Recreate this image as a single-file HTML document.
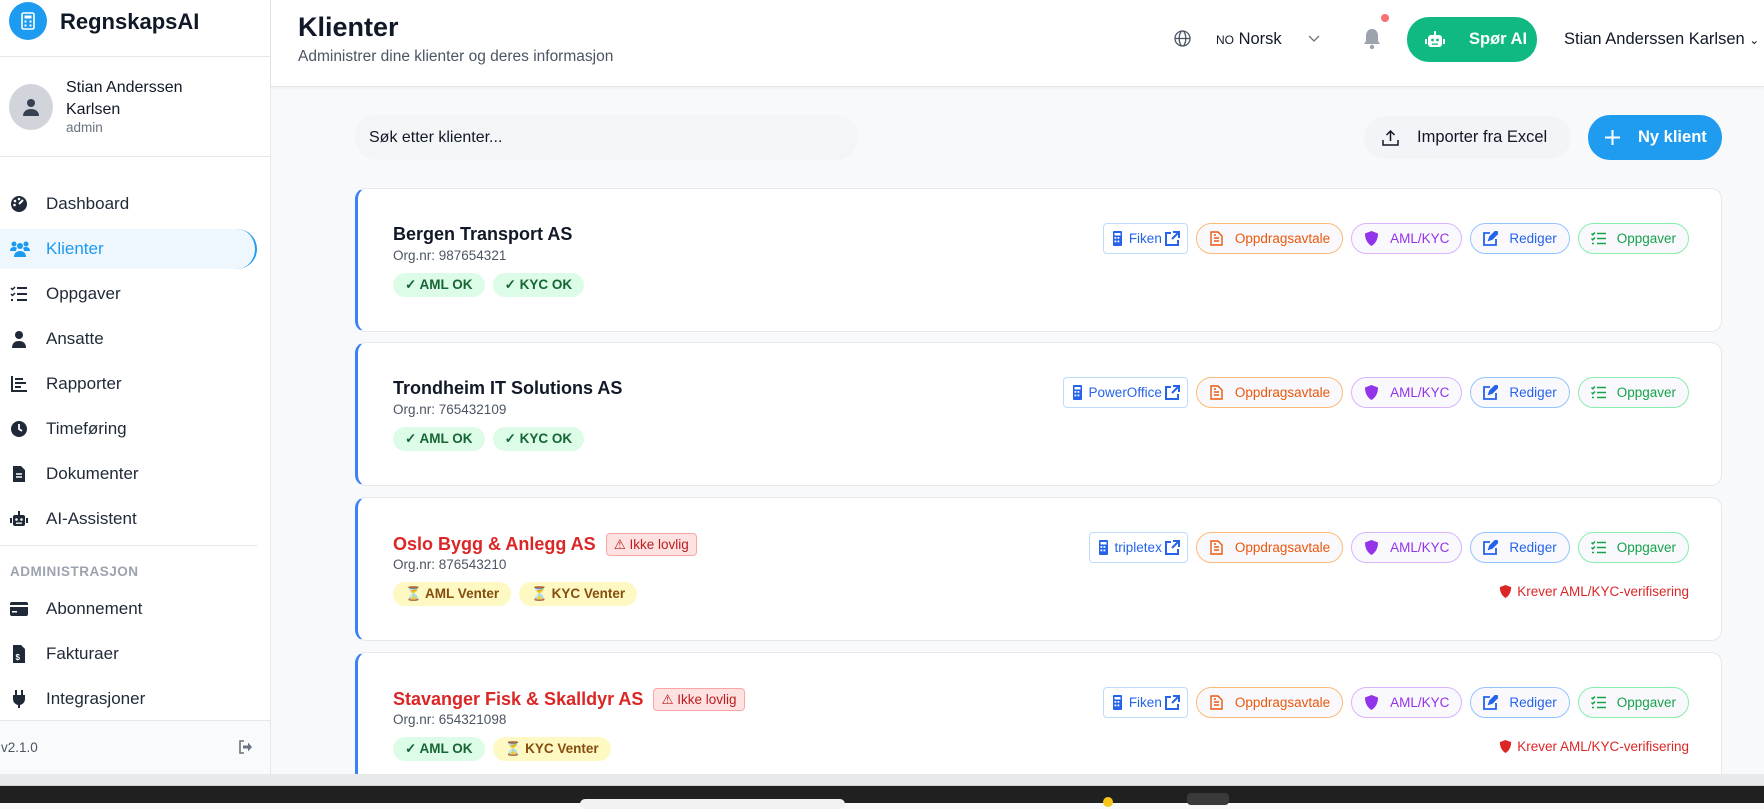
<!DOCTYPE html>
<html><head><meta charset="utf-8"><style>
*{box-sizing:border-box;margin:0;padding:0}
body{width:1764px;height:803px;overflow:hidden;font-family:"Liberation Sans",sans-serif;background:#f8f9fb;position:relative;color:#111827}
.abs{position:absolute}
#side{left:0;top:0;width:271px;height:774px;background:#fff;border-right:1px solid #e5e7eb}
.nav{position:absolute;left:0;width:257px;height:40px;display:flex;align-items:center;font-size:17px;color:#1f2937}
.nav .ic{width:46px;padding-left:10px;display:flex;align-items:center}
.nav svg{width:18px;height:18px;fill:#1f2937}
#hdr{left:271px;top:0;width:1493px;height:87px;background:#fff;border-bottom:1px solid #e5e7eb;box-shadow:0 1px 3px rgba(0,0,0,.05)}
.card{position:absolute;left:355px;width:1367px;height:144px;background:#fff;border:1px solid #e5e7eb;border-left:3px solid #3b82f6;border-radius:11px}
.cname{position:absolute;left:35px;top:35px;font-size:18px;font-weight:bold;color:#111827;display:flex;align-items:center}
.org{position:absolute;left:35px;top:59px;font-size:13.5px;color:#4b5563}
.badges{position:absolute;left:35px;top:84px;display:flex;gap:8px}
.b{height:24px;border-radius:12px;padding:0 12px;font-size:13.5px;font-weight:bold;display:flex;align-items:center}
.ok{background:#dcfce7;color:#166534}
.wt{background:#fef9c3;color:#854d0e}
.il{margin-left:10px;height:23px;background:#fee2e2;border:1px solid #fca5a5;border-radius:4px;color:#b91c1c;font-size:13.5px;font-weight:normal;padding:0 7px;display:flex;align-items:center;gap:4px}
.acts{position:absolute;right:32px;top:34px;display:flex;gap:8px}
.a{height:31px;border-radius:16px;padding:0 12px;font-size:13.5px;display:flex;align-items:center;gap:11px;background:#f9f8fd;border:1px solid}
.a svg{width:15px;height:15px}
.int{border-radius:4px;border-color:#bfdbfe;color:#2563eb;background:#fff;padding:0 7px;gap:3px}
.od{border-color:#fdba74;color:#ea580c}
.am{border-color:#d8b4fe;color:#9333ea}
.re{border-color:#93c5fd;color:#2563eb}
.op{border-color:#86efac;color:#16a34a}
.kr{position:absolute;right:32px;top:86px;font-size:13.5px;color:#dc2626;display:flex;align-items:center;gap:5px}
</style></head><body>
<div id="side" class="abs">
  <div class="abs" style="left:9px;top:2px;width:38px;height:38px;border-radius:50%;background:#1d9bf0;display:flex;align-items:center;justify-content:center">
    <svg width="14" height="18" viewBox="0 0 14 18"><rect x="1" y="1" width="12" height="16" rx="1.5" fill="none" stroke="#fff" stroke-width="1.6"/><rect x="3.5" y="3.5" width="7" height="3" fill="#fff"/><g fill="#fff"><rect x="3.5" y="8.5" width="2" height="2"/><rect x="8.5" y="8.5" width="2" height="2"/><rect x="3.5" y="12.5" width="2" height="2"/><rect x="8.5" y="12.5" width="2" height="2"/></g></svg>
  </div>
  <div class="abs" style="left:60px;top:9px;font-size:22px;font-weight:bold">RegnskapsAI</div>
  <div class="abs" style="left:0;top:56px;width:270px;border-top:1px solid #e5e7eb"></div>
  <div class="abs" style="left:9px;top:84px;width:44px;height:46px;border-radius:50%;background:#d1d5db;display:flex;align-items:center;justify-content:center">
    <svg width="18" height="18" viewBox="0 0 18 18" fill="#374151"><circle cx="9" cy="5" r="4"/><path d="M1 18c0-5 4-7 8-7s8 2 8 7z"/></svg>
  </div>
  <div class="abs" style="left:66px;top:77px;font-size:16px;line-height:22px;color:#111827">Stian Anderssen<br>Karlsen</div>
  <div class="abs" style="left:66px;top:120px;font-size:13.5px;color:#6b7280">admin</div>
  <div class="abs" style="left:0;top:156px;width:270px;border-top:1px solid #e5e7eb"></div>

  <div class="nav" style="top:184px"><span class="ic"><svg viewBox="0 0 18 18"><circle cx="9" cy="9" r="8"/><path d="M9 9l4-4" stroke="#fff" stroke-width="2"/><circle cx="5" cy="6" r="1.3" fill="#fff"/><circle cx="9" cy="4" r="1.3" fill="#fff"/><circle cx="4.5" cy="10" r="1.3" fill="#fff"/></svg></span>Dashboard</div>
  <div class="nav" style="top:229px;height:40px;background:#eef6fe;border-radius:0 20px 20px 0;border-right:2px solid #1d9bf0;color:#1d9bf0"><span class="ic"><svg viewBox="0 0 20 18" style="fill:#1d9bf0;width:20px"><circle cx="4" cy="4" r="2.5"/><circle cx="16" cy="4" r="2.5"/><circle cx="10" cy="6" r="3"/><path d="M0 11c0-3 2-4 4-4s3 1 3 1-1 1-1 3zM20 11c0-3-2-4-4-4s-3 1-3 1 1 1 1 3zM4 17c0-4 3-6 6-6s6 2 6 6z"/></svg></span>Klienter</div>
  <div class="nav" style="top:274px"><span class="ic"><svg viewBox="0 0 18 18"><path d="M1 3l1.5 1.5L5 2M1 9l1.5 1.5L5 8" stroke="#1f2937" stroke-width="1.5" fill="none"/><rect x="7" y="2" width="10" height="2"/><rect x="7" y="8" width="10" height="2"/><rect x="1" y="14" width="2" height="2"/><rect x="7" y="14" width="10" height="2"/></svg></span>Oppgaver</div>
  <div class="nav" style="top:319px"><span class="ic"><svg viewBox="0 0 18 18"><circle cx="9" cy="5" r="4"/><path d="M2 18c0-5 3-7 7-7s7 2 7 7z"/></svg></span>Ansatte</div>
  <div class="nav" style="top:364px"><span class="ic"><svg viewBox="0 0 18 18"><rect x="1" y="1" width="2" height="16"/><rect x="1" y="15" width="16" height="2"/><rect x="5" y="3" width="8" height="2"/><rect x="5" y="7" width="11" height="2"/><rect x="5" y="11" width="6" height="2"/></svg></span>Rapporter</div>
  <div class="nav" style="top:409px"><span class="ic"><svg viewBox="0 0 18 18"><circle cx="9" cy="9" r="8"/><path d="M9 4v5l3 2" stroke="#fff" stroke-width="1.8" fill="none"/></svg></span>Timeføring</div>
  <div class="nav" style="top:454px"><span class="ic"><svg viewBox="0 0 18 18"><path d="M3 1h8l4 4v12H3z"/><path d="M6 9h6M6 12h6" stroke="#fff" stroke-width="1.5"/></svg></span>Dokumenter</div>
  <div class="nav" style="top:499px"><span class="ic"><svg viewBox="0 0 18 18"><rect x="3" y="5" width="12" height="11" rx="2"/><rect x="8" y="1" width="2" height="4"/><rect x="0" y="8" width="2" height="5"/><rect x="16" y="8" width="2" height="5"/><circle cx="6.5" cy="9.5" r="1.3" fill="#fff"/><circle cx="11.5" cy="9.5" r="1.3" fill="#fff"/><rect x="6" y="12.5" width="6" height="1.3" fill="#fff"/></svg></span>AI-Assistent</div>
  <div class="abs" style="left:0;top:545px;width:257px;border-top:1px solid #e5e7eb"></div>
  <div class="abs" style="left:10px;top:564px;font-size:13.5px;font-weight:bold;color:#9ca3af;letter-spacing:.5px">ADMINISTRASJON</div>
  <div class="nav" style="top:589px"><span class="ic"><svg viewBox="0 0 18 18"><rect x="0" y="2" width="18" height="14" rx="2"/><rect x="0" y="5" width="18" height="2" fill="#fff"/><rect x="2" y="11" width="5" height="1.5" fill="#fff"/></svg></span>Abonnement</div>
  <div class="nav" style="top:634px"><span class="ic"><svg viewBox="0 0 18 18"><path d="M3 0h8l4 4v14H3z"/><text x="5.5" y="15" font-size="8" fill="#fff" font-family="Liberation Sans" font-weight="bold">$</text></svg></span>Fakturaer</div>
  <div class="nav" style="top:679px"><span class="ic"><svg viewBox="0 0 18 18"><rect x="5" y="0" width="2" height="5"/><rect x="11" y="0" width="2" height="5"/><path d="M3 5h12v4a6 6 0 0 1-12 0z"/><rect x="8" y="13" width="2" height="5"/></svg></span>Integrasjoner</div>
  <div class="abs" style="left:0;top:720px;width:270px;height:54px;background:#f9fafb;border-top:1px solid #e5e7eb"></div>
  <div class="abs" style="left:1px;top:740px;font-size:13.5px;color:#4b5563">v2.1.0</div>
  <svg class="abs" style="left:238px;top:740px" width="15" height="14" viewBox="0 0 15 14"><path d="M6 1H2v12h4" stroke="#6b7280" stroke-width="1.6" fill="none"/><path d="M5 5.5h5V2.5L14 7l-4 4.5v-3H5z" fill="#6b7280"/></svg>
</div>

<div id="hdr" class="abs">
  <div class="abs" style="left:27px;top:12px;font-size:27px;font-weight:bold">Klienter</div>
  <div class="abs" style="left:27px;top:48px;font-size:15.5px;color:#4b5563">Administrer dine klienter og deres informasjon</div>
  <svg class="abs" style="left:903px;top:30px" width="17" height="17" viewBox="0 0 17 17" fill="none" stroke="#4b5563" stroke-width="1.3"><circle cx="8.5" cy="8.5" r="7.5"/><ellipse cx="8.5" cy="8.5" rx="3.3" ry="7.5"/><path d="M1 8.5h15"/></svg>
  <div class="abs" style="left:945px;top:30px;font-size:16.5px;color:#111827"><span style="font-size:12px">NO</span> Norsk</div>
  <svg class="abs" style="left:1037px;top:35px" width="12" height="8" viewBox="0 0 12 8" fill="none" stroke="#6b7280" stroke-width="1.3"><path d="M1 1l5 5 5-5"/></svg>
  <svg class="abs" style="left:1092px;top:28px" width="18" height="22" viewBox="0 0 18 22" fill="#9ca3af"><path d="M9 1c4 0 6 3 6 7v5l2 3H1l2-3V8c0-4 2-7 6-7z"/><circle cx="9" cy="19" r="2.2"/></svg>
  <div class="abs" style="left:1110px;top:14px;width:8px;height:8px;border-radius:50%;background:#f87171"></div>
  <div class="abs" style="left:1136px;top:17px;width:130px;height:45px;border-radius:22px;background:#10b981;color:#fff;font-size:16.5px;font-weight:bold;display:flex;align-items:center;padding-left:18px;gap:24px">
    <svg width="20" height="18" viewBox="0 0 20 18" fill="#fff"><rect x="3" y="4" width="14" height="12" rx="3"/><rect x="9" y="0" width="2" height="4"/><rect x="0" y="8" width="2" height="5"/><rect x="18" y="8" width="2" height="5"/><circle cx="7.5" cy="9" r="1.4" fill="#10b981"/><circle cx="12.5" cy="9" r="1.4" fill="#10b981"/><rect x="7" y="12.5" width="6" height="1.3" fill="#10b981"/></svg>Spør AI</div>
  <div class="abs" style="left:1293px;top:30px;font-size:16.5px;color:#111827;white-space:nowrap">Stian Anderssen Karlsen <span style="font-size:12px">&#8964;</span></div>
</div>

<div class="abs" style="left:355px;top:115px;width:503px;height:45px;border-radius:22px;background:#f3f4f6;opacity:.8"></div>
<div class="abs" style="left:369px;top:129px;font-size:16px;color:#111827">Søk etter klienter...</div>
<div class="abs" style="left:1364px;top:116px;width:207px;height:43px;border-radius:22px;background:#f3f4f7;display:flex;align-items:center;padding-left:18px;gap:18px;font-size:16.5px;color:#111827">
  <svg width="17" height="17" viewBox="0 0 17 17" fill="none" stroke="#111827" stroke-width="1.5"><path d="M1 11v5h15v-5M8.5 12V2M4.5 6l4-4 4 4"/></svg>Importer fra Excel</div>
<div class="abs" style="left:1588px;top:115px;width:134px;height:45px;border-radius:22px;background:#1f9cf0;display:flex;align-items:center;padding-left:17px;gap:18px;font-size:16.5px;font-weight:bold;color:#fff">
  <svg width="15" height="15" viewBox="0 0 15 15" stroke="#fff" stroke-width="2"><path d="M7.5 0v15M0 7.5h15"/></svg>Ny klient</div>

<div class="card" style="top:188px">
  <div class="cname">Bergen Transport AS</div>
  <div class="org">Org.nr: 987654321</div>
  <div class="badges"><span class="b ok">✓ AML OK</span><span class="b ok">✓ KYC OK</span></div>
  <div class="acts">
    <span class="a int"><svg viewBox="0 0 15 15" fill="#2563eb"><rect x="2" y="0" width="9" height="15" rx="1"/><g fill="#fff"><rect x="3.5" y="2" width="6" height="2.5"/><rect x="3.5" y="6" width="1.8" height="1.8"/><rect x="6.5" y="6" width="1.8" height="1.8"/><rect x="3.5" y="9.5" width="1.8" height="1.8"/><rect x="6.5" y="9.5" width="1.8" height="1.8"/></g></svg>Fiken<svg viewBox="0 0 15 15" fill="none" stroke="#2563eb" stroke-width="2"><path d="M6 2H1v12h12V9M8 1h6v6M14 1L7 8"/></svg></span>
    <span class="a od"><svg viewBox="0 0 15 15" fill="none" stroke="#ea580c" stroke-width="1.4"><path d="M2 1h7l4 4v9H2z"/><path d="M5 7h5M5 10h5M5 4h2"/></svg>Oppdragsavtale</span>
    <span class="a am"><svg viewBox="0 0 15 15" fill="#9333ea"><path d="M7.5 0l6.5 2.5c0 6-2.5 10-6.5 12.5C3.5 12.5 1 8.5 1 2.5z"/></svg>AML/KYC</span>
    <span class="a re"><svg viewBox="0 0 15 15" fill="none" stroke="#2563eb" stroke-width="1.8"><path d="M7 2H1v12h12V8"/><path d="M6 9l1-3 6-6 2 2-6 6z" fill="#2563eb"/></svg>Rediger</span>
    <span class="a op"><svg viewBox="0 0 15 15" fill="none" stroke="#16a34a" stroke-width="1.5"><path d="M0.5 2.5l1.3 1.3L4 1.5M0.5 7.5l1.3 1.3L4 6.5M6 2.5h9M6 7.5h9M6 12.5h9M1 12.5h2"/></svg>Oppgaver</span>
  </div>
</div>
<div class="card" style="top:342px">
  <div class="cname">Trondheim IT Solutions AS</div>
  <div class="org">Org.nr: 765432109</div>
  <div class="badges"><span class="b ok">✓ AML OK</span><span class="b ok">✓ KYC OK</span></div>
  <div class="acts">
    <span class="a int"><svg viewBox="0 0 15 15" fill="#2563eb"><rect x="2" y="0" width="9" height="15" rx="1"/><g fill="#fff"><rect x="3.5" y="2" width="6" height="2.5"/><rect x="3.5" y="6" width="1.8" height="1.8"/><rect x="6.5" y="6" width="1.8" height="1.8"/><rect x="3.5" y="9.5" width="1.8" height="1.8"/><rect x="6.5" y="9.5" width="1.8" height="1.8"/></g></svg>PowerOffice<svg viewBox="0 0 15 15" fill="none" stroke="#2563eb" stroke-width="2"><path d="M6 2H1v12h12V9M8 1h6v6M14 1L7 8"/></svg></span>
    <span class="a od"><svg viewBox="0 0 15 15" fill="none" stroke="#ea580c" stroke-width="1.4"><path d="M2 1h7l4 4v9H2z"/><path d="M5 7h5M5 10h5M5 4h2"/></svg>Oppdragsavtale</span>
    <span class="a am"><svg viewBox="0 0 15 15" fill="#9333ea"><path d="M7.5 0l6.5 2.5c0 6-2.5 10-6.5 12.5C3.5 12.5 1 8.5 1 2.5z"/></svg>AML/KYC</span>
    <span class="a re"><svg viewBox="0 0 15 15" fill="none" stroke="#2563eb" stroke-width="1.8"><path d="M7 2H1v12h12V8"/><path d="M6 9l1-3 6-6 2 2-6 6z" fill="#2563eb"/></svg>Rediger</span>
    <span class="a op"><svg viewBox="0 0 15 15" fill="none" stroke="#16a34a" stroke-width="1.5"><path d="M0.5 2.5l1.3 1.3L4 1.5M0.5 7.5l1.3 1.3L4 6.5M6 2.5h9M6 7.5h9M6 12.5h9M1 12.5h2"/></svg>Oppgaver</span>
  </div>
</div>
<div class="card" style="top:497px">
  <div class="cname" style="color:#dc2626">Oslo Bygg &amp; Anlegg AS<span class="il">⚠ Ikke lovlig</span></div>
  <div class="org">Org.nr: 876543210</div>
  <div class="badges"><span class="b wt">⏳ AML Venter</span><span class="b wt">⏳ KYC Venter</span></div>
  <div class="acts">
    <span class="a int"><svg viewBox="0 0 15 15" fill="#2563eb"><rect x="2" y="0" width="9" height="15" rx="1"/><g fill="#fff"><rect x="3.5" y="2" width="6" height="2.5"/><rect x="3.5" y="6" width="1.8" height="1.8"/><rect x="6.5" y="6" width="1.8" height="1.8"/><rect x="3.5" y="9.5" width="1.8" height="1.8"/><rect x="6.5" y="9.5" width="1.8" height="1.8"/></g></svg>tripletex<svg viewBox="0 0 15 15" fill="none" stroke="#2563eb" stroke-width="2"><path d="M6 2H1v12h12V9M8 1h6v6M14 1L7 8"/></svg></span>
    <span class="a od"><svg viewBox="0 0 15 15" fill="none" stroke="#ea580c" stroke-width="1.4"><path d="M2 1h7l4 4v9H2z"/><path d="M5 7h5M5 10h5M5 4h2"/></svg>Oppdragsavtale</span>
    <span class="a am"><svg viewBox="0 0 15 15" fill="#9333ea"><path d="M7.5 0l6.5 2.5c0 6-2.5 10-6.5 12.5C3.5 12.5 1 8.5 1 2.5z"/></svg>AML/KYC</span>
    <span class="a re"><svg viewBox="0 0 15 15" fill="none" stroke="#2563eb" stroke-width="1.8"><path d="M7 2H1v12h12V8"/><path d="M6 9l1-3 6-6 2 2-6 6z" fill="#2563eb"/></svg>Rediger</span>
    <span class="a op"><svg viewBox="0 0 15 15" fill="none" stroke="#16a34a" stroke-width="1.5"><path d="M0.5 2.5l1.3 1.3L4 1.5M0.5 7.5l1.3 1.3L4 6.5M6 2.5h9M6 7.5h9M6 12.5h9M1 12.5h2"/></svg>Oppgaver</span>
  </div>
  <div class="kr"><svg width="13" height="13" viewBox="0 0 15 15" fill="#dc2626"><path d="M7.5 0l6.5 2.5c0 6-2.5 10-6.5 12.5C3.5 12.5 1 8.5 1 2.5z"/></svg>Krever AML/KYC-verifisering</div>
</div>
<div class="card" style="top:652px;height:140px">
  <div class="cname" style="color:#dc2626">Stavanger Fisk &amp; Skalldyr AS<span class="il">⚠ Ikke lovlig</span></div>
  <div class="org">Org.nr: 654321098</div>
  <div class="badges"><span class="b ok">✓ AML OK</span><span class="b wt">⏳ KYC Venter</span></div>
  <div class="acts">
    <span class="a int"><svg viewBox="0 0 15 15" fill="#2563eb"><rect x="2" y="0" width="9" height="15" rx="1"/><g fill="#fff"><rect x="3.5" y="2" width="6" height="2.5"/><rect x="3.5" y="6" width="1.8" height="1.8"/><rect x="6.5" y="6" width="1.8" height="1.8"/><rect x="3.5" y="9.5" width="1.8" height="1.8"/><rect x="6.5" y="9.5" width="1.8" height="1.8"/></g></svg>Fiken<svg viewBox="0 0 15 15" fill="none" stroke="#2563eb" stroke-width="2"><path d="M6 2H1v12h12V9M8 1h6v6M14 1L7 8"/></svg></span>
    <span class="a od"><svg viewBox="0 0 15 15" fill="none" stroke="#ea580c" stroke-width="1.4"><path d="M2 1h7l4 4v9H2z"/><path d="M5 7h5M5 10h5M5 4h2"/></svg>Oppdragsavtale</span>
    <span class="a am"><svg viewBox="0 0 15 15" fill="#9333ea"><path d="M7.5 0l6.5 2.5c0 6-2.5 10-6.5 12.5C3.5 12.5 1 8.5 1 2.5z"/></svg>AML/KYC</span>
    <span class="a re"><svg viewBox="0 0 15 15" fill="none" stroke="#2563eb" stroke-width="1.8"><path d="M7 2H1v12h12V8"/><path d="M6 9l1-3 6-6 2 2-6 6z" fill="#2563eb"/></svg>Rediger</span>
    <span class="a op"><svg viewBox="0 0 15 15" fill="none" stroke="#16a34a" stroke-width="1.5"><path d="M0.5 2.5l1.3 1.3L4 1.5M0.5 7.5l1.3 1.3L4 6.5M6 2.5h9M6 7.5h9M6 12.5h9M1 12.5h2"/></svg>Oppgaver</span>
  </div>
  <div class="kr"><svg width="13" height="13" viewBox="0 0 15 15" fill="#dc2626"><path d="M7.5 0l6.5 2.5c0 6-2.5 10-6.5 12.5C3.5 12.5 1 8.5 1 2.5z"/></svg>Krever AML/KYC-verifisering</div>
</div>

<div class="abs" style="left:0;top:774px;width:1764px;height:12px;background:#e8e9ea;border-bottom:1px solid #d4d4d4;z-index:5"></div>
<div class="abs" style="left:0;top:786px;width:1764px;height:17px;background:#202020;z-index:5"></div>
<div class="abs" style="left:580px;top:799px;width:265px;height:10px;border-radius:8px;background:#f2f2f2;z-index:6"></div>
<div class="abs" style="left:1103px;top:797px;width:10px;height:10px;border-radius:50%;background:#f5c518;z-index:6"></div>
<div class="abs" style="left:1187px;top:793px;width:42px;height:12px;border-radius:4px;background:#3a3a3a;z-index:6"></div>
</body></html>
